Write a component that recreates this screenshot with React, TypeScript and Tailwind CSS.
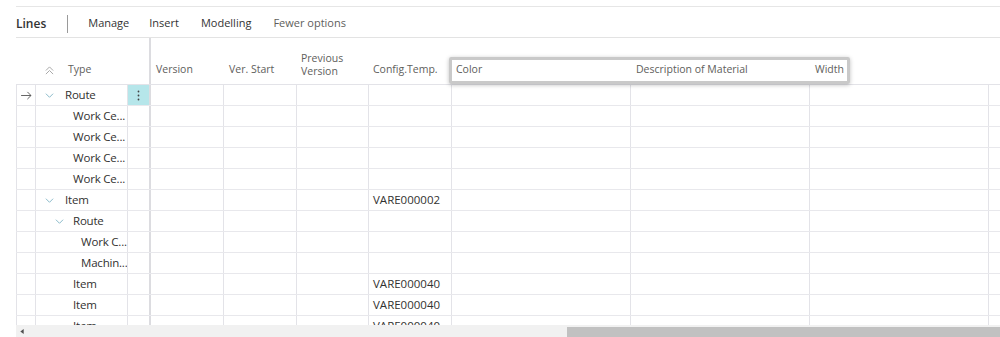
import React from 'react';

const cols = ['w-[73px]', 'w-[73px]', 'w-[72px]', 'w-[83px]', 'w-[179px]', 'w-[179px]', 'w-[179px]'];

type Line = { label: string; level: number; chevron?: boolean; config?: string; current?: boolean };

const lines: Line[] = [
  { label: 'Route', level: 0, chevron: true, current: true },
  { label: 'Work Ce...', level: 1 },
  { label: 'Work Ce...', level: 1 },
  { label: 'Work Ce...', level: 1 },
  { label: 'Work Ce...', level: 1 },
  { label: 'Item', level: 0, chevron: true, config: 'VARE000002' },
  { label: 'Route', level: 1, chevron: true },
  { label: 'Work C...', level: 2 },
  { label: 'Machin...', level: 2 },
  { label: 'Item', level: 1, config: 'VARE000040' },
  { label: 'Item', level: 1, config: 'VARE000040' },
  { label: 'Item', level: 1, config: 'VARE000040' },
];

const indent = ['pl-[29px]', 'pl-[37px]', 'pl-[45px]'];
const chevronPos = ['left-[9px]', 'left-[19px]', 'left-[27px]'];

const ChevronDown = () => (
  <svg className="w-[9px] h-[9px]" viewBox="0 0 10 10" fill="none" stroke="#7fb3c4" strokeWidth="1">
    <path d="M1 3l4 4 4-4" />
  </svg>
);

const LinesGrid = () => {
  return (
    <div className="min-h-[337px] bg-white text-[#323130] text-[11.5px] font-['Open_Sans',sans-serif] overflow-hidden">
      <div className="ml-4 mt-[6px] border-t border-[#e6e6e6]" />
      {/* action bar */}
      <div className="ml-4 h-[31px] pt-[3px] flex items-center border-b border-[#e3e3e3] text-[11px]">
        <span className="text-[12px] font-semibold text-[#333]">Lines</span>
        <span className="ml-[21px] h-[18px] border-l border-[#9a9a9a]" />
        <span className="ml-[20px] text-[#333]">Manage</span>
        <span className="ml-[20px] text-[#333]">Insert</span>
        <span className="ml-[22px] text-[#333]">Modelling</span>
        <span className="ml-[22px] text-[#605e5c]">Fewer options</span>
      </div>

      <div className="relative ml-4">
        {/* header */}
        <div className="flex h-[46px] text-[10.5px] text-[#605e5c]">
          <div className="w-[135px] shrink-0 border-r-2 border-[#dcdce0] flex items-end pb-[6px]">
            <svg className="ml-[29px] mb-[3px] w-[9px] h-[9px]" viewBox="0 0 10 10" fill="none" stroke="#a0a0a0" strokeWidth="1">
              <path d="M1 5l4-4 4 4M1 9l4-4 4 4" />
            </svg>
            <span className="ml-[14px]">Type</span>
          </div>
          <div className="w-[73px] shrink-0 flex items-end pb-[6px] pl-[5px]">Version</div>
          <div className="w-[73px] shrink-0 flex items-end pb-[6px] pl-[5px]">Ver. Start</div>
          <div className="w-[72px] shrink-0 flex items-end pb-[6px] pl-[4px] leading-[13px]">Previous<br />Version</div>
          <div className="w-[83px] shrink-0 flex items-end pb-[6px] pl-[4px]">Config.Temp.</div>
          <div className="w-[179px] shrink-0 flex items-end pb-[6px] pl-[4px]">Color</div>
          <div className="w-[179px] shrink-0 flex items-end pb-[6px] pl-[5px]">Description of Material</div>
          <div className="w-[179px] shrink-0 flex items-end pb-[6px] pl-[5px]">Width</div>
        </div>

        {/* highlighted personalisation frame */}
        <div className="absolute left-[433px] top-[19px] w-[401px] h-[27px] rounded-[2px] border-[3px] border-[#c9c9c9] shadow-[0_1px_4px_rgba(0,0,0,0.25)]" />

        {/* rows */}
        <div className="border-t border-[#e3e3e8] h-[241px] overflow-hidden">
          {lines.map((l, i) => (
            <div key={i} className="flex h-[21px] border-b border-[#e8e8ec]">
              <div className="w-[20px] shrink-0 border-l border-r border-[#e3e3e8] flex items-center justify-center">
                {l.current && (
                  <svg className="w-[11px] h-[9px]" viewBox="0 0 12 10" fill="none" stroke="#555" strokeWidth="1">
                    <path d="M0 5h11M7 1l4 4-4 4" />
                  </svg>
                )}
              </div>
              <div className={`relative w-[92px] shrink-0 border-r border-[#e3e3e8] flex items-center whitespace-nowrap overflow-hidden tracking-[-0.2px] text-[#323130] ${indent[l.level]}`}>
                {l.chevron && (
                  <span className={`absolute top-[6px] ${chevronPos[l.level]}`}>
                    <ChevronDown />
                  </span>
                )}
                {l.label}
              </div>
              <div
                className={`w-[23px] shrink-0 border-r-2 border-[#dcdce0] flex items-center justify-center ${l.current ? 'bg-[#b6e6ea]' : ''}`}
              >
                {l.current && (
                  <svg className="w-[3px] h-[11px]" viewBox="0 0 3 11" fill="#444">
                    <circle cx="1.5" cy="1.5" r="0.9" />
                    <circle cx="1.5" cy="5.5" r="0.9" />
                    <circle cx="1.5" cy="9.5" r="0.9" />
                  </svg>
                )}
              </div>
              {cols.map((w, c) => (
                <div key={c} className={`${w} shrink-0 border-r border-[#e3e3e8] flex items-center pl-[4px]`}>
                  {c === 3 && l.config}
                </div>
              ))}
              <div className="flex-1" />
            </div>
          ))}
        </div>

        {/* horizontal scrollbar */}
        <div className="h-[12px] bg-[#f1f1f1] flex items-center">
          <svg className="ml-[4px] w-[4px] h-[5px]" viewBox="0 0 4 6" fill="#505050">
            <path d="M4 0v6L0 3z" />
          </svg>
          <div className="ml-auto w-[433px] h-[10px] mt-[2px] bg-[#c1c1c1]" />
        </div>
      </div>
    </div>
  );
};

export default LinesGrid;
